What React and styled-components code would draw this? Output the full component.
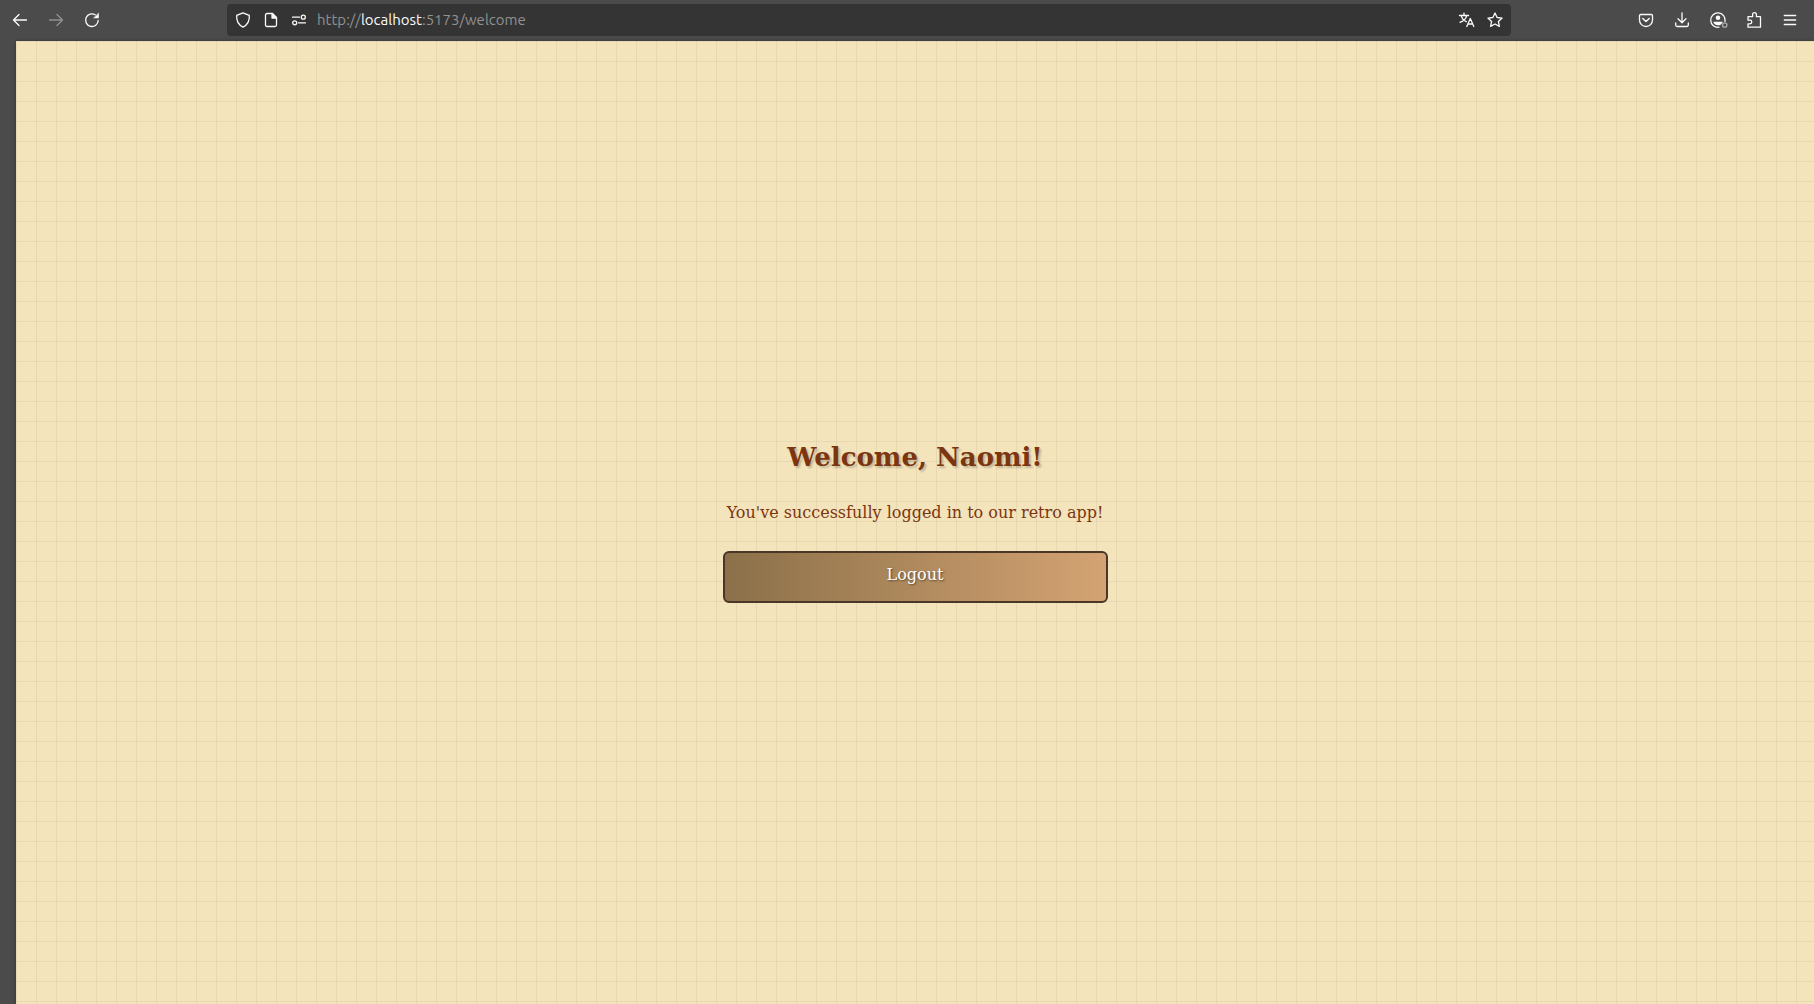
import React from "react";
import styled, { createGlobalStyle } from "styled-components";

const GlobalStyle = createGlobalStyle`
  * { box-sizing: border-box; }
  body { margin: 0; background: #4b4b4b; }
`;

const Browser = styled.div`
  display: flex;
  flex-direction: column;
  min-height: 100vh;
  background: #4b4b4b;
`;

const Toolbar = styled.header`
  display: flex;
  justify-content: space-between;
  align-items: center;
  height: 41px;
  padding: 0 6px 1px 2px;
`;

const ButtonGroup = styled.nav`
  display: flex;
`;

const IconButton = styled.button`
  display: grid;
  place-items: center;
  width: ${(p) => (p.$compact ? 28 : 36)}px;
  height: 32px;
  padding: 0;
  border: 0;
  border-radius: 4px;
  background: none;
  color: #fbfbfe;
  opacity: ${(p) => (p.disabled ? 0.4 : 1)};
`;

const AddressBar = styled.div`
  display: flex;
  align-items: center;
  flex: 0 1 1284px;
  height: 32px;
  padding: 0 2px;
  border-radius: 4px;
  background: #343434;
`;

const Address = styled.a`
  flex: 1;
  padding-left: 4px;
  color: #919191;
  font: 15px/20px Ubuntu, "Noto Sans", sans-serif;
  text-decoration: none;
`;

const Host = styled.span`
  color: #fbfbfe;
`;

const Glyph = styled.svg`
  width: 16px;
  height: 16px;
  overflow: visible;
  fill: none;
  stroke: currentColor;
  stroke-width: 1.3;
  stroke-linecap: round;
  stroke-linejoin: round;
`;

const Page = styled.main`
  flex: 1;
  display: flex;
  align-items: center;
  justify-content: center;
  margin-left: 16px;
  padding-bottom: 6px;
  background-color: #f3e4bc;
  background-image:
    linear-gradient(rgba(139, 115, 85, 0.1) 1px, transparent 1px),
    linear-gradient(90deg, rgba(139, 115, 85, 0.1) 1px, transparent 1px);
  background-size: 20px 20px;
  box-shadow: 0 0 4px rgba(0, 0, 0, 0.3);
`;

const Welcome = styled.section`
  display: flex;
  flex-direction: column;
  width: 385px;
  color: #7b3510;
  font-family: "Special Elite", "DejaVu Serif", serif;
  text-align: center;
`;

const Title = styled.h1`
  margin: 0 0 24px;
  font-size: 26px;
  line-height: 40px;
  text-shadow: 2px 2px 2px rgba(0, 0, 0, 0.2);
`;

const Message = styled.p`
  margin: 0 0 26px;
  font-size: 16px;
  line-height: 24px;
  white-space: nowrap;
`;

const LogoutButton = styled.button`
  height: 52px;
  padding: 0 0 4px;
  border: 2px solid #4a3728;
  border-radius: 6px;
  background: linear-gradient(to right, #8b7049, #d4a373);
  color: #fff;
  font-family: inherit;
  font-size: 16px;
  line-height: 24px;
  text-shadow: 1px 1px 2px rgba(0, 0, 0, 0.5);
`;

function Icon({ children }) {
  return <Glyph viewBox="0 0 16 16" aria-hidden="true">{children}</Glyph>;
}

const icons = {
  back: <path d="M14.5 8H1.5M7 2.5 1.5 8 7 13.5" />,
  forward: <path d="M1.5 8h13M9 2.5 14.5 8 9 13.5" />,
  reload: (
    <>
      <path d="M14.2 8.5A6.3 6.3 0 1 1 11.2 2.8" />
      <path d="M14.5 1.5v4.4H10z" fill="currentColor" strokeWidth="0.6" />
    </>
  ),
  shield: <path d="M8 .8 14.3 3.3c.4 5-1.7 9.5-6.3 11.9C3.4 12.8 1.3 8.3 1.7 3.3z" />,
  page: (
    <>
      <path d="M4 1.5h5.500L13.5 5.500V13a1.5 1.5 0 0 1-1.5 1.5H4A1.5 1.5 0 0 1 2.5 13V3A1.5 1.5 0 0 1 4 1.5z" />
      <path d="M9 1.5v4.500h4.500z" fill="currentColor" />
    </>
  ),
  permissions: (
    <>
      <path d="M1.5 5.200h7M7.5 10.800h7" />
      <circle cx="12.3" cy="5.2" r="2" />
      <circle cx="3.7" cy="10.8" r="2" />
    </>
  ),
  translate: (
    <>
      <path d="M.5 3.500h9M5 1.200v2.300M2.300 3.700c.5 3 2.500 4.800 5 6M7.700 3.700C7 6.800 4 9.300 1 10.300" />
      <path d="m7.800 14.500 3.500-8 3.500 8M9 12h4.600" />
    </>
  ),
  star: <path d="m8 1 2.100 4.500 5 .6-3.700 3.400 1 4.900L8 12l-4.400 2.400 1-4.900L.9 6.100l5-.6z" />,
  pocket: (
    <>
      <path d="M2.700 2.500h10.600a1.200 1.200 0 0 1 1.200 1.200V8a6.500 6.500 0 0 1-13 0V3.700a1.200 1.200 0 0 1 1.200-1.200z" />
      <path d="M4.800 6.500 8 9.500l3.200-3" strokeWidth="1.5" />
    </>
  ),
  download: <path d="M8 .8v9.700M4 6.800l4 3.900 4-3.900M1.700 11v2a1.500 1.500 0 0 0 1.500 1.500h9.600a1.500 1.500 0 0 0 1.500-1.500v-2" />,
  account: (
    <>
      <path d="M9 15.200A7.200 7.200 0 1 1 15 9.300" />
      <circle cx="8" cy="5.8" r="2.3" fill="currentColor" stroke="none" />
      <path d="M3.500 9.700h9v.8c-1.300 2-2.400 2.800-4.500 2.800s-3.700-1-4.500-2.800z" fill="currentColor" stroke="none" />
      <circle cx="14.7" cy="13" r="2.2" stroke="#aaaaaa" />
    </>
  ),
  extensions: <path d="M2 15.200h12.500V4.700H10.400V2.600a1.900 1.900 0 0 0-3.800 0v2.100H2v3.500h2a1.800 1.800 0 0 1 0 3.600H2z" />,
  menu: <path d="M2.300 3.500h11.400M2.300 8h11.400M2.300 12.500h11.400" />,
};

function Tool({ icon, label, compact, disabled }) {
  return (
    <IconButton type="button" aria-label={label} $compact={compact} disabled={disabled}>
      <Icon>{icons[icon]}</Icon>
    </IconButton>
  );
}

export default function App() {
  return (
    <>
      <GlobalStyle />
      <Browser>
        <Toolbar>
          <ButtonGroup aria-label="Navigation">
            <Tool icon="back" label="Back" />
            <Tool icon="forward" label="Forward" disabled />
            <Tool icon="reload" label="Reload" />
          </ButtonGroup>
          <AddressBar>
            <Tool icon="shield" label="Tracking protection" compact />
            <Tool icon="page" label="Site information" compact />
            <Tool icon="permissions" label="Permissions" compact />
            <Address href="http://localhost:5173/welcome">
              http://<Host>localhost</Host>:5173/welcome
            </Address>
            <Tool icon="translate" label="Translate" compact />
            <Tool icon="star" label="Bookmark" compact />
          </AddressBar>
          <ButtonGroup aria-label="Browser tools">
            <Tool icon="pocket" label="Save to Pocket" />
            <Tool icon="download" label="Downloads" />
            <Tool icon="account" label="Account" />
            <Tool icon="extensions" label="Extensions" />
            <Tool icon="menu" label="Menu" />
          </ButtonGroup>
        </Toolbar>
        <Page>
          <Welcome>
            <Title>Welcome, Naomi!</Title>
            <Message>You've successfully logged in to our retro app!</Message>
            <LogoutButton type="button">Logout</LogoutButton>
          </Welcome>
        </Page>
      </Browser>
    </>
  );
}
